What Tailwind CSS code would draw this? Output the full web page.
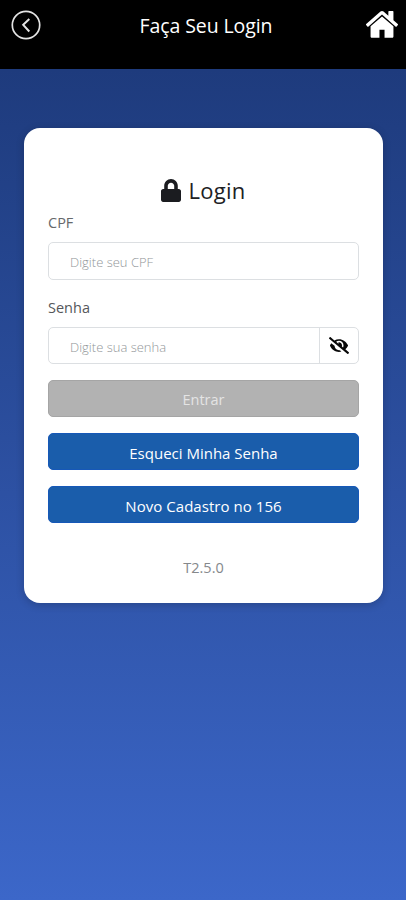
<!DOCTYPE html>
<html lang="pt-BR">
<head>
<meta charset="utf-8">
<meta name="viewport" content="width=device-width, initial-scale=1">
<title>Faça Seu Login</title>
<script src="https://cdn.jsdelivr.net/npm/@tailwindcss/browser@4"></script>
</head>
<body class="flex h-[900px] flex-col overflow-hidden bg-[#3c67c9] font-['Open_Sans','Noto_Sans',sans-serif]">
<header class="flex h-[69px] shrink-0 items-start justify-between bg-black pl-[11px] pr-[8px] pt-[10px] text-white">
  <button aria-label="Voltar" class="size-[31px]">
    <svg viewBox="0 0 31 31" class="size-[31px]" fill="none" stroke="#e4e4e4"><circle cx="15" cy="15" r="13.7" stroke-width="1.7"/><path d="M18.300 9L12.200 14.900L18.300 21.500" stroke-width="2"/></svg>
  </button>
  <h1 class="pt-px pl-[4px] text-[19.5px] leading-[29px] tracking-[-0.1px] whitespace-nowrap">Faça Seu Login</h1>
  <button aria-label="Início" class="h-[28px] w-[32px]">
    <svg viewBox="26 253 1612 1290" class="h-[27px] w-[32px]" preserveAspectRatio="none" fill="white"><path d="M1408 992v480q0 26-19 45t-45 19H960v-384H704v384H320q-26 0-45-19t-19-45V992q0-1 .5-3t.5-3l575-474 575 474q1 2 1 6zm223-69l-62 74q-8 9-21 11h-3q-13 0-21-7L832 424l-692 577q-12 8-24 7-13-2-21-11l-62-74q-8-10-7-23.500t11-21.500l719-599q32-26 76-26t76 26l244 204V288q0-14 9-23t23-9h192q14 0 23 9t9 23v408l219 182q10 8 11 21.500t-7 23.500z"/></svg>
  </button>
</header>
<main class="flex-1 bg-linear-to-b from-[#1e3b7d] to-[#3c67c9] pl-6 pr-[23px] pt-[59px]">
  <form class="flex h-[475px] flex-col rounded-2xl bg-white px-6 pt-[46px] shadow-[0_2px_8px_rgba(0,0,0,0.2)]">
    <h2 class="flex h-[32px] items-center justify-center gap-[7px] text-[22px] leading-[32px] tracking-[0.3px] text-[#202124]">
      <svg viewBox="0 0 448 512" class="h-[23px] w-[20px]" fill="#1b1c20"><path d="M400 224h-24v-72C376 68.200 307.800 0 224 0S72 68.200 72 152v72H48c-26.500 0-48 21.500-48 48v192c0 26.500 21.500 48 48 48h352c26.500 0 48-21.500 48-48V272c0-26.500-21.500-48-48-48zm-104 0H152v-72c0-39.700 32.300-72 72-72s72 32.300 72 72v72z"/></svg>
      <span>Login</span>
    </h2>
    <label class="mt-[6px] h-[22px] text-[14.5px] leading-[22px] text-[#66686b]">CPF</label>
    <div class="mt-[8px] flex h-[38px] shrink-0 items-center rounded-[5px] border border-[#dcdfe2] pl-[21px] text-[13px] font-light text-[#929699]"><span class="pt-[4px]">Digite seu CPF</span></div>
    <label class="mt-[17px] h-[22px] text-[14.5px] leading-[22px] text-[#55575a]">Senha</label>
    <div class="mt-[8px] flex h-[37px] shrink-0 items-center justify-between rounded-[5px] border border-[#dcdfe2] pl-[21px] text-[13px] font-light text-[#929699]"><span class="pt-[4px]">Digite sua senha</span>
      <button type="button" aria-label="Mostrar senha" class="flex h-full w-[39px] items-center justify-center border-l border-[#dcdfe2]">
        <svg viewBox="0 0 640 512" class="h-[17px] w-[20px]" preserveAspectRatio="none" fill="#080808"><path d="M320 400c-75.850 0-137.250-58.710-142.900-133.110L72.200 185.820c-13.790 17.300-26.480 35.590-36.720 55.590a32.350 32.350 0 0 0 0 29.190C89.710 376.410 197.070 448 320 448c26.910 0 52.870-4 77.890-10.460L346 397.390a144.130 144.130 0 0 1-26 2.610zm313.820 58.100l-110.550-85.440a331.250 331.250 0 0 0 81.250-102.070 32.350 32.350 0 0 0 0-29.190C550.290 135.590 442.930 64 320 64a308.150 308.150 0 0 0-147.320 37.700L45.460 3.370A16 16 0 0 0 23 6.180L3.370 31.450A16 16 0 0 0 6.180 53.900l588.360 454.730a16 16 0 0 0 22.460-2.810l19.640-25.270a16 16 0 0 0-2.820-22.450zm-183.720-142l-39.300-30.380A94.750 94.750 0 0 0 416 256a94.760 94.760 0 0 0-121.310-92.210A47.650 47.650 0 0 1 304 192a46.640 46.640 0 0 1-1.540 10l-73.610-56.890A142.310 142.310 0 0 1 320 112a143.920 143.920 0 0 1 144 144c0 21.630-5.290 41.790-13.900 60.110z"/></svg>
      </button>
    </div>
    <button type="button" class="mt-4 h-[37px] shrink-0 rounded-[5px] border border-[#a5a5a5] bg-[#b2b2b2] pt-[3px] text-[14.5px] text-[#e4e4e4]">Entrar</button>
    <button type="button" class="mt-4 h-[37px] shrink-0 rounded-[5px] border border-[#1658b8] bg-[#1a5dab] pt-[3px] text-[15px] text-white">Esqueci Minha Senha</button>
    <button type="button" class="mt-4 h-[37px] shrink-0 rounded-[5px] border border-[#1658b8] bg-[#1a5dab] pt-[3px] text-[15px] tracking-[0.05px] text-white">Novo Cadastro no 156</button>
    <p class="mt-[34px] text-center text-[14.5px] leading-[22px] text-[#85888b]">T2.5.0</p>
  </form>
</main>
</body>
</html>
